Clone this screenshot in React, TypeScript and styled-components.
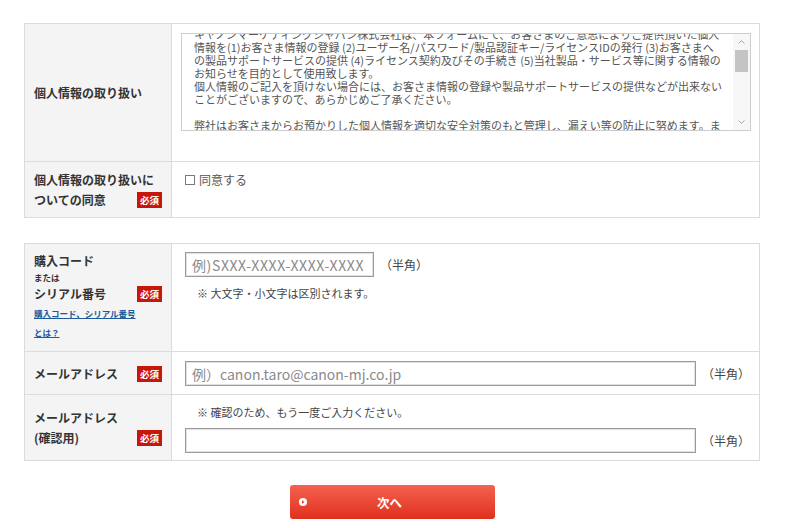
import styled, { createGlobalStyle } from "styled-components";

const GlobalStyle = createGlobalStyle`
  html, body {
    margin: 0;
    padding: 0;
    background: #fff;
  }
  body {
    font-family: "Noto Sans CJK JP", "Noto Sans", sans-serif;
    color: #333;
  }
`;

const Page = styled.div`
  width: 800px;
  box-sizing: border-box;
  padding: 23px 0 0 24px;
`;

const FormTable = styled.div<{ $mt?: number }>`
  width: 736px;
  box-sizing: border-box;
  border: 1px solid #dcdcdc;
  border-bottom: none;
  margin-top: ${(p) => p.$mt ?? 0}px;
`;

const Row = styled.div`
  display: grid;
  grid-template-columns: 147px 1fr;
  border-bottom: 1px solid #dcdcdc;
`;

const Label = styled.div<{ $pad?: string }>`
  box-sizing: border-box;
  background: #f4f4f4;
  border-right: 1px solid #dcdcdc;
  padding: ${(p) => p.$pad ?? "8px 9px 7px 9px"};
  display: flex;
  flex-direction: column;
  justify-content: center;
  font-size: 12px;
  font-weight: bold;
  line-height: 20px;
  color: #333;
`;

const LabelLine = styled.div<{ $lh?: number }>`
  display: flex;
  align-items: center;
  justify-content: space-between;
  line-height: ${(p) => p.$lh ?? 20}px;
  white-space: nowrap;
`;

const Small = styled.div`
  font-size: 8.5px;
  line-height: 14px;
`;

const HelpLink = styled.a`
  display: block;
  font-size: 8.5px;
  line-height: 19px;
  color: #1d5b9b;
  text-decoration: underline;
  white-space: nowrap;
`;

const Badge = styled.span`
  flex-shrink: 0;
  width: 25px;
  height: 16px;
  background: #c8160b;
  color: #fff;
  font-size: 9.5px;
  font-weight: bold;
  line-height: 16px;
  text-align: center;
`;

const Value = styled.div<{ $pad?: string }>`
  box-sizing: border-box;
  padding: ${(p) => p.$pad ?? "9px 9px 7px 13px"};
  font-size: 12px;
  color: #555;
`;

const Scroller = styled.div`
  display: flex;
  width: 570px;
  height: 98px;
  box-sizing: border-box;
  border: 1px solid #cdcdcd;
  overflow: hidden;
`;

const ScrollText = styled.div`
  flex: 1;
  overflow: hidden;
  padding-left: 12px;
  font-size: 11px;
  line-height: 13px;
  color: #555;
  white-space: pre;
`;

const TextLines = styled.div`
  margin-top: -6px;
`;

const Track = styled.div`
  width: 17px;
  display: flex;
  flex-direction: column;
  background: #f7f7f7;
`;

const Arrow = styled.div`
  height: 16px;
  display: flex;
  align-items: center;
  justify-content: center;
`;

const Thumb = styled.div`
  height: 22px;
  margin: 0 2px;
  background: #c4c4c4;
`;

const Check = styled.label`
  display: flex;
  align-items: center;
  gap: 4px;
  line-height: 20px;
  font-size: 12px;
  color: #555;
`;

const Box = styled.input`
  appearance: none;
  margin: 0;
  width: 10px;
  height: 10px;
  border: 1px solid #7a7a7a;
  background: #fff;
`;

const InputLine = styled.div`
  display: flex;
  align-items: center;
  gap: 6px;
`;

const TextInput = styled.input<{ $w?: number; $ls?: number }>`
  box-sizing: border-box;
  ${(p) => (p.$w ? `width: ${p.$w}px;` : "flex: 1; min-width: 0;")}
  height: 25px;
  margin: 0;
  padding: 0 6px;
  border: 1px solid #9a9a9a;
  box-shadow: inset 0 0 0 1px #e2e2e2;
  border-radius: 0;
  font-family: inherit;
  font-size: 14px;
  letter-spacing: ${(p) => p.$ls ?? 0}px;
  color: #333;
  &::placeholder {
    color: #8a8a8a;
  }
`;

const Unit = styled.span`
  font-size: 12px;
  color: #444;
  white-space: nowrap;
`;

const Note = styled.div<{ $mt?: number; $mb?: number }>`
  margin: ${(p) => p.$mt ?? 0}px 0 ${(p) => p.$mb ?? 0}px 12px;
  font-size: 11px;
  line-height: 16px;
  color: #444;
`;

const Actions = styled.div`
  width: 736px;
  display: flex;
  justify-content: center;
  margin-top: 24px;
`;

const NextButton = styled.button`
  width: 205px;
  height: 34px;
  display: flex;
  align-items: center;
  padding: 0 22px 0 9px;
  border: none;
  border-radius: 3px;
  background: linear-gradient(#f4624f, #e0301e);
  color: #fff;
  font-family: inherit;
  font-size: 12.5px;
  font-weight: bold;
`;

const ButtonText = styled.span`
  flex: 1;
  text-align: center;
`;

const policy = [
  "キヤノンマーケティングジャパン株式会社は、本フォームにて、お客さまのご意思によりご提供頂いた個人",
  "情報を(1)お客さま情報の登録 (2)ユーザー名/パスワード/製品認証キー/ライセンスIDの発行 (3)お客さまへ",
  "の製品サポートサービスの提供 (4)ライセンス契約及びその手続き (5)当社製品・サービス等に関する情報の",
  "お知らせを目的として使用致します。",
  "個人情報のご記入を頂けない場合には、お客さま情報の登録や製品サポートサービスの提供などが出来ない",
  "ことがございますので、あらかじめご了承ください。",
  "",
  "弊社はお客さまからお預かりした個人情報を適切な安全対策のもと管理し、漏えい等の防止に努めます。ま",
];

function Chevron({ up }: { up?: boolean }) {
  return (
    <svg width="7" height="4" viewBox="0 0 7 4">
      <path
        d={up ? "M0.5 3.5 L3.5 0.7 L6.5 3.5" : "M0.5 0.5 L3.5 3.3 L6.5 0.5"}
        fill="none"
        stroke="#a8a8a8"
        strokeWidth="1"
      />
    </svg>
  );
}

function PlayIcon() {
  return (
    <svg width="8" height="8" viewBox="0 0 8 8">
      <circle cx="4" cy="4" r="4" fill="#fff" />
      <path d="M3 2.3 L5.6 4 L3 5.7 Z" fill="#e4402c" />
    </svg>
  );
}

export default function App() {
  return (
    <>
      <GlobalStyle />
      <Page>
        <FormTable>
          <Row>
            <Label>
              <LabelLine>個人情報の取り扱い</LabelLine>
            </Label>
            <Value $pad="9px 8px 30px 9px">
              <Scroller>
                <ScrollText>
                  <TextLines>{policy.join("\n")}</TextLines>
                </ScrollText>
                <Track>
                  <Arrow>
                    <Chevron up />
                  </Arrow>
                  <Thumb />
                  <div style={{ flex: 1 }} />
                  <Arrow>
                    <Chevron />
                  </Arrow>
                </Track>
              </Scroller>
            </Value>
          </Row>
          <Row>
            <Label>
              <LabelLine>個人情報の取り扱いに</LabelLine>
              <LabelLine>
                ついての同意
                <Badge>必須</Badge>
              </LabelLine>
            </Label>
            <Value $pad="8px 9px 7px 13px">
              <Check>
                <Box type="checkbox" />
                同意する
              </Check>
            </Value>
          </Row>
        </FormTable>

        <FormTable $mt={25}>
          <Row>
            <Label $pad="8px 9px 9px 9px">
              <LabelLine $lh={18}>購入コード</LabelLine>
              <Small>または</Small>
              <LabelLine>
                シリアル番号
                <Badge>必須</Badge>
              </LabelLine>
              <HelpLink href="#">購入コード、シリアル番号</HelpLink>
              <HelpLink href="#">とは？</HelpLink>
            </Label>
            <Value $pad="8px 9px 7px 13px">
              <InputLine>
                <TextInput $w={189} $ls={0.6} placeholder="例)SXXX-XXXX-XXXX-XXXX" />
                <Unit>（半角）</Unit>
              </InputLine>
              <Note $mt={8}>※ 大文字・小文字は区別されます。</Note>
            </Value>
          </Row>
          <Row>
            <Label>
              <LabelLine>
                メールアドレス
                <Badge>必須</Badge>
              </LabelLine>
            </Label>
            <Value $pad="9px 9px 8px 13px">
              <InputLine>
                <TextInput placeholder="例）canon.taro@canon-mj.co.jp" />
                <Unit>（半角）</Unit>
              </InputLine>
            </Value>
          </Row>
          <Row>
            <Label>
              <LabelLine>メールアドレス</LabelLine>
              <LabelLine>
                (確認用)
                <Badge>必須</Badge>
              </LabelLine>
            </Label>
            <Value $pad="9px 9px 7px 13px">
              <Note $mb={8}>※ 確認のため、もう一度ご入力ください。</Note>
              <InputLine>
                <TextInput />
                <Unit>（半角）</Unit>
              </InputLine>
            </Value>
          </Row>
        </FormTable>

        <Actions>
          <NextButton type="button">
            <PlayIcon />
            <ButtonText>次へ</ButtonText>
          </NextButton>
        </Actions>
      </Page>
    </>
  );
}
